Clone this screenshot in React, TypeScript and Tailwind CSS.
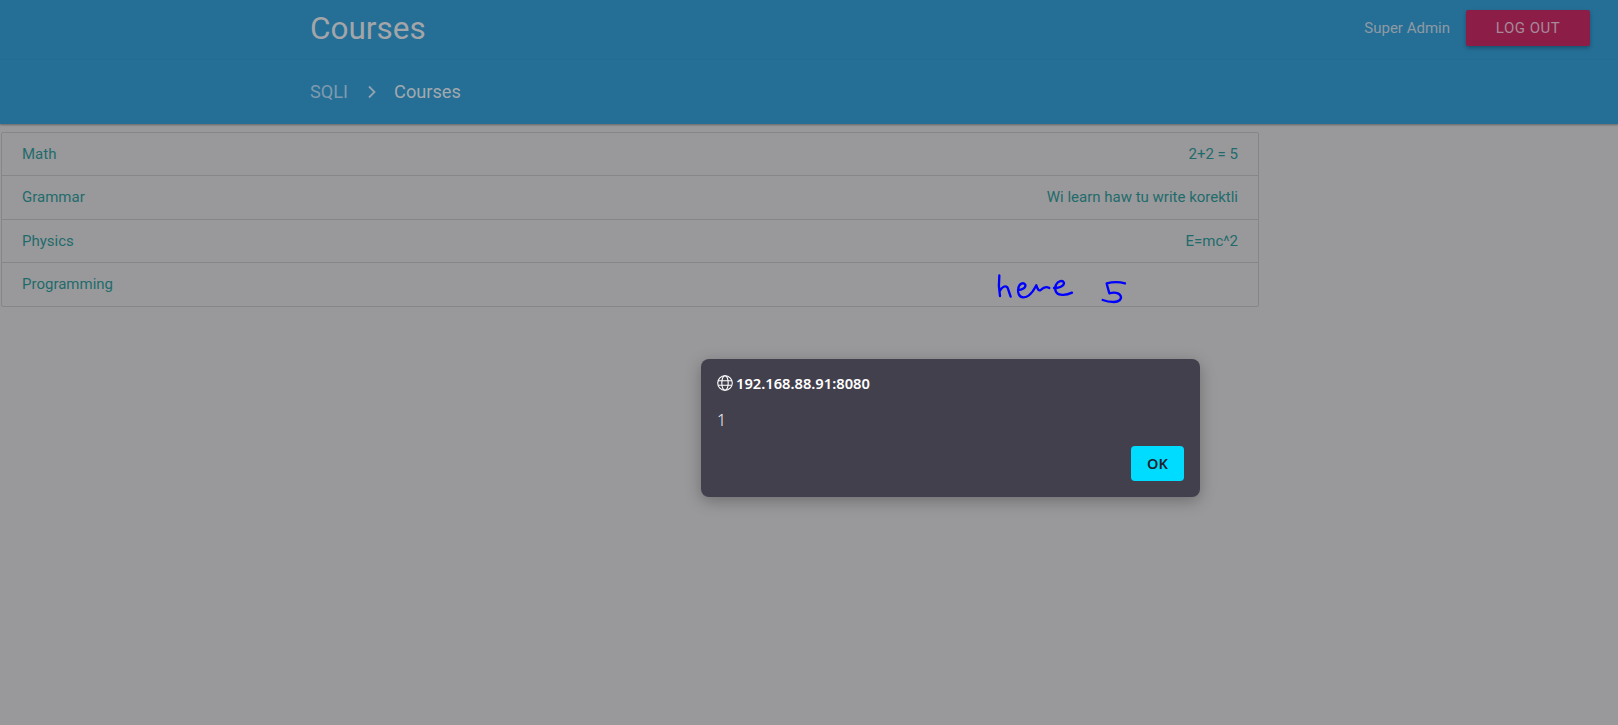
import React from 'react';

const courses = [
  { name: 'Math', detail: '2+2 = 5' },
  { name: 'Grammar', detail: 'Wi learn haw tu write korektli' },
  { name: 'Physics', detail: 'E=mc^2' },
  { name: 'Programming', detail: '' },
];

const GlobeIcon = () => (
  <svg width="16" height="16" viewBox="0 0 16 16" fill="none" stroke="#ffffff" strokeWidth="1.1" className="shrink-0">
    <circle cx="8" cy="8" r="7.3" />
    <ellipse cx="8" cy="8" rx="3.2" ry="7.3" />
    <path d="M1.2 5.7h13.6M1.2 10.3h13.6" />
  </svg>
);

const Scribble = () => (
  <svg width="140" height="40" viewBox="0 0 420 120" fill="none" stroke="#0000ff" strokeWidth="7" strokeLinecap="round" strokeLinejoin="round" className="absolute left-[990px] top-[268px]">
    <path d="M28 22C26 40 26 62 30 84M30 68C36 56 46 52 52 58C56 66 58 76 62 86" />
    <path d="M84 66C96 66 108 60 106 50C100 42 88 46 85 60C82 76 88 88 100 88C112 88 122 78 128 70C132 64 136 58 139 52C142 62 146 70 152 66C160 58 168 54 178 60" />
    <path d="M192 60C206 62 222 54 222 44C218 36 204 38 198 50C192 66 198 78 212 80C224 82 238 78 246 74" />
    <path d="M405 46C390 42 366 42 350 46C352 56 356 68 358 76C372 72 388 74 392 84C396 94 386 102 372 102C360 102 348 100 338 96" />
  </svg>
);

export default function App() {
  return (
    <div className="relative min-h-[725px] w-full overflow-hidden bg-[#99999b] font-['Roboto',sans-serif]">
      <header className="h-[124px] bg-[#256f97] shadow-[0_1px_2px_rgba(0,0,0,0.35)]">
        <div className="flex h-[60px] items-center justify-between border-b border-[#246c93] pb-[3px] pl-[310px] pr-[28px]">
          <h1 className="mt-[2px] text-[31.5px] font-normal leading-none text-[#a3a5a8]">Courses</h1>
          <div className="flex items-center gap-4">
            <span className="text-[15px] text-[#8f9aa3]">Super Admin</span>
            <button className="flex h-9 w-[124px] items-center justify-center rounded-[2px] bg-[#8c1d47] text-[15px] tracking-[0.5px] text-[#a68a99] shadow-[0_2px_4px_rgba(0,0,0,0.3)]">
              LOG OUT
            </button>
          </div>
        </div>
        <nav className="flex h-[64px] items-center pl-[310px] text-[18.2px]">
          <span className="text-[#7f9aad]">SQLI</span>
          <svg width="10" height="14" viewBox="0 0 10 14" fill="none" stroke="#8fa3b0" strokeWidth="1.8" className="ml-[19px] mr-[17px]">
            <path d="M2 1.5 L7.5 7 L2 12.5" />
          </svg>
          <span className="text-[#a3a9ad]">Courses</span>
        </nav>
      </header>

      <div className="ml-px mt-2 w-[1258px] rounded-[2px] border border-[#868688]">
        {courses.map((c, i) => (
          <div
            key={c.name}
            className={`flex items-center justify-between px-5 text-[15px] text-[#1f6b6c] ${i > 0 ? 'h-[43.4px] border-t border-[#868688]' : 'h-[42.4px]'}`}
          >
            <span>{c.name}</span>
            <span>{c.detail}</span>
          </div>
        ))}
      </div>

      <Scribble />

      <div className="absolute left-[701px] top-[359px] flex h-[138px] w-[499px] flex-col rounded-lg bg-[#43404e] px-4 pt-4 font-['Noto_Sans',sans-serif] shadow-[0_4px_16px_rgba(0,0,0,0.28)]">
        <div className="flex items-center gap-[3px] text-[14.7px] font-semibold leading-[16px] text-white">
          <GlobeIcon />
          <span>192.168.88.91:8080</span>
        </div>
        <div className="mt-[21px] text-base font-light leading-[16px] text-[#f4f4f6]">1</div>
        <div className="mt-auto mb-4 flex justify-end">
          <button className="h-[35px] w-[53px] rounded-[4px] bg-[#00dcff] text-[14.5px] font-semibold text-[#20212b]">OK</button>
        </div>
      </div>
    </div>
  );
}
